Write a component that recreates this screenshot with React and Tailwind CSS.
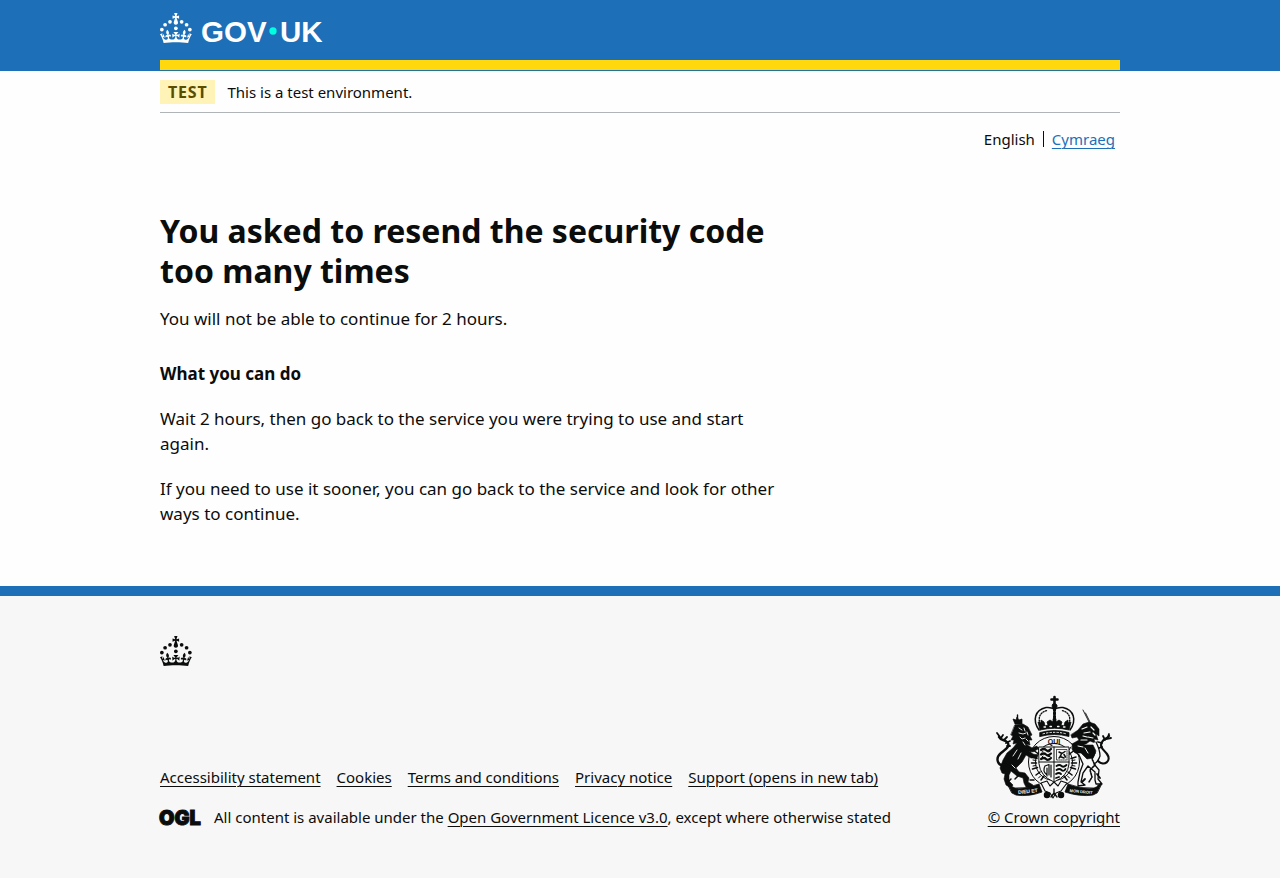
const crownPath =
  "M33.1,9.8c.2-.1.3-.3.5-.5l4.6,2.4v-6.8l-4.6,1.5c-.1-.2-.3-.3-.5-.5l1.9-5.9h-6.7l1.9,5.9c-.2.1-.3.3-.5.5l-4.6-1.5v6.8l4.6-2.4c.1.2.3.3.5.5l-2.6,8c-.9,2.8,1.2,5.7,4.1,5.7h0c3,0,5.1-2.9,4.1-5.7l-2.6-8ZM37,37.9s-3.4,3.8-4.1,6.1c2.2,0,4.2-.5,6.4-2.8l-.7,8.5c-2-2.8-4.4-4.1-5.7-3.8.1,3.1.5,6.7,5.8,7.2,3.7.3,6.7-1.5,7-3.8.4-2.6-2-4.3-3.7-1.6-1.4-4.5,2.4-6.1,4.9-3.2-1.9-4.5-1.8-7.7,2.4-10.9,3,4,2.6,7.3-1.2,11.1,2.4-1.3,6.2,0,4,4.6-1.2-2.8-3.7-2.2-4.2.2-.3,1.7.7,3.7,3,4.2,1.9.3,4.7-.9,7-5.9-1.3,0-2.4.7-3.9,1.7l2.4-8c.6,2.3,1.4,3.7,2.2,4.5.6-1.6.5-2.8,0-5.3l5,1.8c-2.6,3.6-5.2,8.7-7.3,17.5-7.4-1.1-15.7-1.7-24.5-1.7h0c-8.8,0-17.1.6-24.5,1.7-2.1-8.9-4.7-13.9-7.3-17.5l5-1.8c-.5,2.5-.6,3.7,0,5.3.8-.8,1.6-2.3,2.2-4.5l2.4,8c-1.5-1-2.6-1.7-3.9-1.7,2.3,5,5.2,6.2,7,5.9,2.3-.4,3.3-2.4,3-4.2-.5-2.4-3-3.1-4.2-.2-2.2-4.6,1.6-6,4-4.6-3.7-3.7-4.2-7.1-1.2-11.1,4.2,3.2,4.3,6.4,2.4,10.9,2.5-2.8,6.3-1.3,4.9,3.2-1.8-2.7-4.1-1-3.7,1.6.3,2.3,3.3,4.1,7,3.8,5.4-.5,5.7-4.2,5.8-7.2-1.3-.2-3.7,1-5.7,3.8l-.7-8.5c2.2,2.3,4.2,2.7,6.4,2.8-.7-2.3-4.1-6.1-4.1-6.1h10.6,0Z";

function CrownShapes() {
  return (
    <g fill="currentColor">
      <circle cx="20" cy="17.6" r="3.7" />
      <circle cx="10.2" cy="23.5" r="3.7" />
      <circle cx="3.7" cy="33.2" r="3.7" />
      <circle cx="31.7" cy="30.6" r="3.7" />
      <circle cx="43.3" cy="17.6" r="3.7" />
      <circle cx="53.2" cy="23.5" r="3.7" />
      <circle cx="59.7" cy="33.2" r="3.7" />
      <path d={crownPath} />
    </g>
  );
}

function GovLogo() {
  return (
    <svg role="img" aria-label="GOV.UK" viewBox="0 0 324 60" width="162" height="30" className="block overflow-visible text-white">
      <CrownShapes />
      <g fill="currentColor" className="font-['Liberation_Sans',sans-serif] text-[59px] font-bold">
        <text x="82" y="57">GOV</text>
        <text x="240" y="57">UK</text>
      </g>
      <circle cx="226" cy="36" r="7.3" fill="#00ffe0" />
    </svg>
  );
}

function OglLogo() {
  return (
    <svg role="img" aria-label="OGL" viewBox="0 0 41 17" width="41" height="17" className="block shrink-0 overflow-visible">
      <text
        x="-1"
        y="16"
        fill="currentColor"
        stroke="currentColor"
        strokeWidth="1"
        className="font-['Inter',sans-serif] text-[20px] font-black"
      >
        OGL
      </text>
    </svg>
  );
}

function Crest() {
  return (
    <svg aria-hidden="true" viewBox="0 0 124 106" width="124" height="106" className="block overflow-visible text-[#0b0c0c]">
      <g fill="none" stroke="currentColor" strokeLinecap="round" strokeLinejoin="round">
        {/* cross and orb */}
        <path d="M62.5 3v7M59.5 5.500h6" strokeWidth="2.600" />
        <circle cx="62.5" cy="12" r="2.400" fill="currentColor" />
        {/* crown arches */}
        <path d="M47 36C40 26 43 16 54 13.500q5-.5 8.500 1.500 3.500-2 8.500-1.500C82 16 85 26 78 36" strokeWidth="1.500" />
        <path d="M49 32C45 24 48 18 55 16.500M76 32C80 24 77 18 70 16.500" strokeWidth="1.400" strokeDasharray="1 1.600" />
        <path d="M62.500 15v13" strokeWidth="3" strokeDasharray="1.800 1.600" />
        {/* fleurs and crosses on the rim */}
        <path d="M48 36l-2-8 3 1 0-3 3 2 1 4 3-1-1-3 3-2 3 2 0-3 1.500-2 1.500 2 0 3 3-2 3 2-1 3 3 1 1-4 3-2 0 3 3-1-2 8q-14-3.500-29 0z" fill="currentColor" strokeWidth=".8" />
        <path d="M48 38.500q14.500-4 29 0v4q-14.500-4-29 0z" fill="currentColor" strokeWidth=".8" />
        <path d="M51 39.800q11.500-3 23 0" stroke="#f7f7f7" strokeWidth="1" strokeDasharray="1.500 2" />
        <path d="M52 33h1.500M58 32.500h1.500M65.500 32.500h1.500M71.500 33h1.500" stroke="#f7f7f7" strokeWidth="1.300" />

        {/* garter */}
        <circle cx="62" cy="68" r="25.500" fill="#f7f7f7" strokeWidth="1" />
        <circle cx="62" cy="68" r="18.500" strokeWidth="1" />
        <path d="M40.500 75l5-1.500M39.500 69h5M40 63l5 1.500M42.500 57l4 3M83.500 75l-5-1.500M84.500 69h-5M84 63l-5 1.500M81.500 57l-4 3M44 81l4-3M80 81l-4-3M49 86l3-4M75 86l-3-4" strokeWidth="1.500" />
        <path d="M41 72l3-.5M41 66l3 .5M45 53l2 3M79 53l-2 3M83 72l-3-.5M83 66l-3 .5M46.500 84l2-2M77.500 84l-2-2" strokeWidth="1" />

        {/* quartered shield */}
        <path d="M47 53h30v17q-1 12-15 18-14-6-15-18z" fill="#f7f7f7" strokeWidth="1" />
        <path d="M62 53v34M47 68h30" strokeWidth="1" />
        <path d="M49 56q3-2 5 0t5-1M49 60.500q3-2 5 0t5-1M49 65q3-2 5 0t5-1" strokeWidth="2.200" />
        <path d="M50 58l1-.5M56 58l2-.5M50 63l1-1M56 62.500h2" strokeWidth="1" />
        <rect x="64.500" y="55.500" width="10.500" height="10.500" strokeWidth=".8" strokeDasharray="1 1" />
        <path d="M67 58l3 1.500 3-2M70 59l-2 3.500 4 1.500M72 60.500l1.500 2.500M67 64l2-2" strokeWidth="1.500" />
        <path d="M53 72q-3 5 2 9M53 72l4-1.500v10.500M55 74v8M59 71v12" strokeWidth="1.200" />
        <path d="M64.500 72q3-2 5 0t5-1M64.500 76q3-2 5 0t4-1M64 80q3-2 5 0M64 84l3-1" strokeWidth="1.800" />

        {/* lion */}
        <path d="M23 30l-2-5 3 1 1-3 2 3 3-1v5z" fill="currentColor" strokeWidth=".7" />
        <path d="M25.500 21v3" strokeWidth="1.400" />
        <path
          d="M23 31l8-1 5 3 2 4 2 4-2 1 2 4-3 0 1 5-4-1 6 4 5-2 1 3-5 3-4-1 4 3 5 1-1 3-6 0-5-3-4 7-6 6 3 4 6 1 4 5-1 4 5 3-1 3-6-1-2-4-1-5-6-2-6-5-2 4 0 6 4 4-2 3-5-3-2-6 1-5-3-1-2-5 3-8 4-7 6-5 4-5-4 1 1-4-3 0 2-4-2-1z"
          fill="currentColor"
          strokeWidth=".6"
        />
        <path d="M27 34l3 2M32 34l1 3M27 39l4 1 3-1M28 43l2 2 3-1M31 48l2 3M35 38l1 3M34 45l2 2M25 56l-4 6M29 59l-3 6M20 71l3 3" stroke="#f7f7f7" strokeWidth=".9" />
        <path d="M14 71c-9 2-11-7-5-12 5-4 10-7 6-11-3-3-6-1-8-5" strokeWidth="2.400" />
        <path d="M8 43l-3-4M9 44l2-3M12 46l3-3M14 49l4-2M15 52l3 0" strokeWidth="1.800" />
        <path d="M17 79l-3 3M19 85l-3 3M26 82l-3 3M38 86l4 0" strokeWidth="1.500" />

        {/* unicorn */}
        <path d="M91 16l7 14M93.500 19l5.500 11" strokeWidth=".9" />
        <path d="M86 36l5-6 6-2 6 2 4 5 0 7-3-2 2 6-4-1 1 4-5-2-4 3-7 1-6 3-1-4 7-4-2-3-5 1-1-3z" fill="currentColor" strokeWidth=".6" />
        <path d="M90 35l5-2M92 39l6-1M96 43l5 1M99 33l3 3M91 42l4 1M89 46h6M101 39l2 2" stroke="#f7f7f7" strokeWidth="1.200" />
        <path d="M104 48q4 8 4 14-2 6-6 8l5 6-1 9 4 5h-6l-1-4 0-8-7-6-5 7-2 9 4 3-7 1 0-4 2-10 3-8-4-9-6-5" fill="#f7f7f7" strokeWidth="1.300" />
        <path d="M81 50l8-2 4 3 8 0 3 6-3 7-6 1-6-6-6 0-3-4z" fill="currentColor" strokeWidth=".6" />
        <path d="M86 52l5 1M93 54l3 5" stroke="#f7f7f7" strokeWidth="1" />
        <path d="M100 54l3 5-3 6 3 6-5 5 2 7-3 5" strokeWidth="1.600" strokeDasharray="1.500 1.200" />
        <path d="M106 67c6 6 14 0 9-7-3-4-8-7-5-12 2-4 5-3 7-6" strokeWidth="2.200" />
        <path d="M113 46l-2-4M114 45l5-1M110 49l-4-1M116 43l1-3M110 53l-3 1" strokeWidth="1.800" />
        <path d="M105 80l3 4M93 85l-3 3M109 90l-3 2" strokeWidth="1.800" />

        {/* compartment and motto scroll */}
        <path d="M49 89l6-2 3 5 4-4 4 4 3-5 6 2-6 8-5 2-3 5-3-5-5-2z" fill="#f7f7f7" strokeWidth="1.100" />
        <path d="M16 91l7 3q12 1 24-4l3 8q-13 5-26 3l-4-2z" fill="currentColor" strokeWidth=".8" />
        <path d="M109 91l-7 3q-14 1-26-4l-3 8q15 5 28 3l4-2z" fill="currentColor" strokeWidth=".8" />
        <circle cx="55" cy="101" r="2.600" fill="currentColor" strokeWidth="1.300" />
        <circle cx="69" cy="101" r="2.600" fill="currentColor" strokeWidth="1.300" />
        <path d="M59 103l3-4 3 4M62 95v5" strokeWidth="1.400" />
      </g>
      <g className="font-['Liberation_Sans',sans-serif] font-bold">
        <text x="62" y="50" textAnchor="middle" fill="currentColor" className="text-[7px]">
          QUI
        </text>
        <text x="36" y="99" textAnchor="middle" transform="rotate(-6 36 99)" fill="#f7f7f7" className="text-[5px]">
          DIEU ET
        </text>
        <text x="89" y="99" textAnchor="middle" transform="rotate(5 89 99)" fill="#f7f7f7" className="text-[4px]">
          MON DROIT
        </text>
      </g>
    </svg>
  );
}

const footerLinks = [
  "Accessibility statement",
  "Cookies",
  "Terms and conditions",
  "Privacy notice",
  "Support (opens in new tab)",
];

function FooterLink({ children }) {
  return (
    <a href="#" className="underline decoration-1 underline-offset-3">
      {children}
    </a>
  );
}

export default function App() {
  return (
    <div className="flex min-h-screen flex-col bg-[#fefefe] font-['Noto_Sans',sans-serif] text-[15px] leading-5 text-[#0b0c0c]">
      <header className="bg-[#1d70b8] px-8 pb-px">
        <div className="mx-auto max-w-[960px] border-b-10 border-[#ffd80d] pt-[13px] pb-[17px]">
          <a href="#" className="inline-block align-top">
            <GovLogo />
          </a>
        </div>
      </header>

      <div className="px-8">
        <div className="mx-auto max-w-[960px]">
          <div className="flex items-center gap-3 border-b border-[#b1b4b6] pt-[9px] pb-2">
            <strong className="bg-[#fff3b8] px-2 py-0.5 text-base leading-5 tracking-wider text-[#594d00]">TEST</strong>
            <span>This is a test environment.</span>
          </div>

          <nav aria-label="Language" className="flex items-center justify-end pt-4 pr-[5px]">
            <span className="border-r border-[#0b0c0c] pr-2 leading-4">English</span>
            <a href="#" lang="cy" className="ml-2 text-[#1d70b8] underline decoration-1 underline-offset-3">
              Cymraeg
            </a>
          </nav>

          <main className="max-w-[625px] pt-[62px] pb-[60px] text-[17px] leading-[25px]">
            <h1 className="mb-[15px] text-[32px] leading-10 font-bold">
              You asked to resend the security code too many times
            </h1>
            <p className="mb-[30px]">You will not be able to continue for 2 hours.</p>
            <h2 className="mb-5 font-bold">What you can do</h2>
            <p className="mb-5">
              Wait 2 hours, then go back to the service you were trying to use and start again.
            </p>
            <p>
              If you need to use it sooner, you can go back to the service and look for other ways to continue.
            </p>
          </main>
        </div>
      </div>

      <footer className="grow border-t-10 border-[#1d70b8] bg-[#f7f7f7] px-8 pt-10 pb-[50px]">
        <div className="mx-auto max-w-[960px]">
          <svg aria-hidden="true" viewBox="0 0 64 60" width="32" height="30" className="block">
            <CrownShapes />
          </svg>
          <div className="mt-7 flex items-end justify-between gap-8">
            <div className="flex flex-col gap-5">
              <ul className="flex flex-wrap gap-x-4 gap-y-2">
                {footerLinks.map((label) => (
                  <li key={label}>
                    <FooterLink>{label}</FooterLink>
                  </li>
                ))}
              </ul>
              <div className="flex items-center gap-[13px]">
                <OglLogo />
                <span>
                  All content is available under the <FooterLink>Open Government Licence v3.0</FooterLink>, except where
                  otherwise stated
                </span>
              </div>
            </div>
            <div className="flex shrink-0 flex-col items-center gap-[7px]">
              <Crest />
              <FooterLink>© Crown copyright</FooterLink>
            </div>
          </div>
        </div>
      </footer>
    </div>
  );
}
